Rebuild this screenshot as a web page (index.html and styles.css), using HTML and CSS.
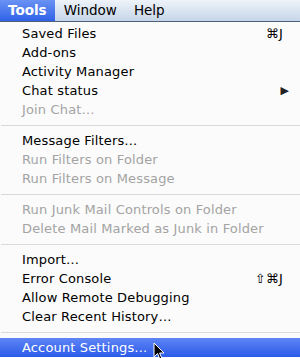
FILE: index.html
```html
<!DOCTYPE html>
<html lang="en">
<head>
    <meta charset="UTF-8">
    <title>Tools menu</title>
    <link rel="stylesheet" href="styles.css">
</head>
<body>
    <div class="menubar">
        <div class="menubar-item active">Tools</div>
        <div class="menubar-item">Window</div>
        <div class="menubar-item">Help</div>
    </div>
    <div class="menu">
        <div class="item"><span>Saved Files</span><span class="key">&#8984;J</span></div>
        <div class="item"><span>Add-ons</span></div>
        <div class="item"><span>Activity Manager</span></div>
        <div class="item"><span>Chat status</span><span class="arrow">&#9654;</span></div>
        <div class="item disabled"><span>Join Chat…</span></div>
        <div class="sep"></div>
        <div class="item"><span>Message Filters…</span></div>
        <div class="item disabled"><span>Run Filters on Folder</span></div>
        <div class="item disabled"><span>Run Filters on Message</span></div>
        <div class="sep"></div>
        <div class="item disabled"><span>Run Junk Mail Controls on Folder</span></div>
        <div class="item disabled"><span>Delete Mail Marked as Junk in Folder</span></div>
        <div class="sep"></div>
        <div class="item"><span>Import…</span></div>
        <div class="item"><span>Error Console</span><span class="key">&#8679;&#8984;J</span></div>
        <div class="item"><span>Allow Remote Debugging</span></div>
        <div class="item"><span>Clear Recent History…</span></div>
        <div class="sep"></div>
        <div class="item selected">
            <span>Account Settings…</span>
            <svg class="cursor" width="12" height="19" viewBox="0 0 12 19">
                <path d="M1 1 L1 15 L4.5 11.5 L7 17.5 L9 16.7 L6.6 11 L11 11 Z" fill="#000" stroke="#fff" stroke-width="1"/>
            </svg>
        </div>
    </div>
</body>
</html>
```

FILE: styles.css
```css
body {
    margin: 0;
    padding: 0;
    width: 300px;
    height: 358px;
    overflow: hidden;
    background: #fbfbfb;
    font-family: "DejaVu Sans", sans-serif;
    font-size: 13px;
    letter-spacing: 0.15px;
    color: #000;
}

.menubar {
    display: flex;
    height: 21px;
    background: linear-gradient(#eef3f9, #c6d6e8);
    border-bottom: 1px solid #4f6278;
    letter-spacing: 0;
}

.menubar-item {
    padding: 0 8px;
    line-height: 21px;
    font-size: 13.5px;
}

.menubar-item.active {
    padding: 0 8px;
    color: #fff;
    font-weight: bold;
    background: linear-gradient(#6a92f4, #2f62e8);
}

.menubar-item + .menubar-item {
    margin-left: 1px;
}

.menu {
    padding-top: 2px;
}

.item {
    position: relative;
    display: flex;
    justify-content: space-between;
    align-items: center;
    height: 19px;
    padding: 0 17px 0 22px;
}

.item.disabled {
    color: #a3a3a3;
}

.item.selected {
    color: #fff;
    background: linear-gradient(#5f84f6, #2b5be8);
}

.arrow {
    font-size: 11px;
    margin-right: -6px;
    color: #222;
}

.sep {
    height: 12px;
    position: relative;
}

.sep::after {
    content: "";
    position: absolute;
    left: 1px;
    right: 0;
    top: 6px;
    height: 1px;
    background: #dadada;
}

.cursor {
    position: absolute;
    left: 153px;
    top: 4px;
}
```
